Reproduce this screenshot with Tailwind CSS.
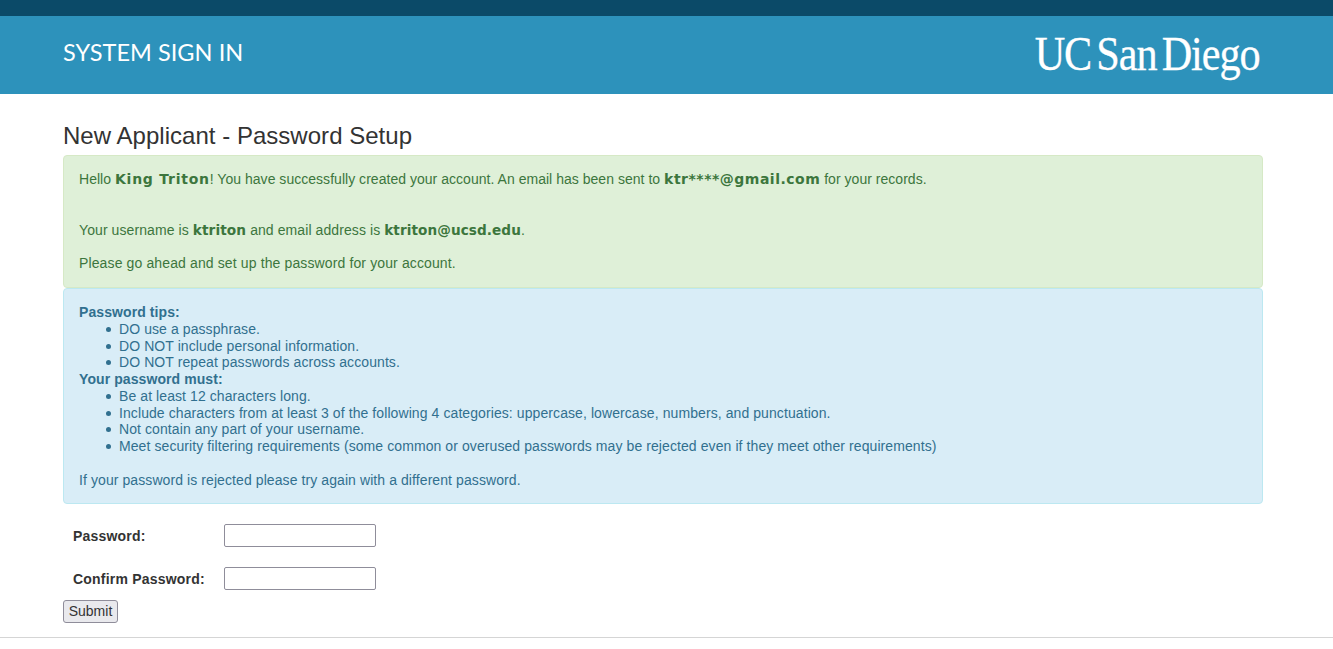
<!DOCTYPE html>
<html lang="en">
<head>
    <meta charset="UTF-8">
    <meta name="viewport" content="width=device-width, initial-scale=1.0">
    <title>New Applicant - Password Setup</title>
    <script src="https://cdn.jsdelivr.net/npm/@tailwindcss/browser@4"></script>
</head>
<body class="bg-white text-[#333333] font-['Liberation_Sans',Arial,sans-serif] text-[14px] overflow-hidden h-[649px]">

    <!-- Header -->
    <div class="h-4 bg-[#0b4a68]"></div>
    <div class="h-[78px] bg-[#2d92bb] flex items-center justify-between pl-[63px] pr-[73px]">
        <h2 class="font-['Lato',sans-serif] text-white text-[23.5px] tracking-[0.05px] -mt-[5px]">SYSTEM SIGN IN</h2>
        <div class="font-['Liberation_Serif',serif] text-white text-[48px] leading-none tracking-[-1.2px] [word-spacing:-5px] [-webkit-text-stroke:0.3px_white] scale-x-[0.88] origin-right -mt-[2px]">UC San Diego</div>
    </div>

    <div class="w-[1200px] ml-[63px]">
        <h1 class="text-[24px] leading-[26px] pt-[29px] pb-[6px] tracking-[0.03px] text-[#333333]">New Applicant - Password Setup</h1>

        <!-- Success message -->
        <div class="h-[133px] bg-[#dff0d8] border border-[#d6e9c6] rounded text-[#3c763d] px-[15px] pt-[14px] tracking-[0.085px]">
            <p class="leading-[18px] tracking-[0.03px]">Hello <b class="font-['DejaVu_Sans',sans-serif] text-[14px] tracking-[0.75px]">King Triton</b>! You have successfully created your account. An email has been sent to <b class="font-['DejaVu_Sans',sans-serif] text-[14px] tracking-[0.5px]">ktr****@gmail.com</b> for your records.</p>
            <p class="leading-[18px] mt-[33px]">Your username is <b class="font-['DejaVu_Sans',sans-serif] text-[13.7px]">ktriton</b> and email address is <b class="font-['DejaVu_Sans',sans-serif] text-[13.6px]">ktriton@ucsd.edu</b>.</p>
            <p class="leading-[18px] mt-[15px] tracking-[0.125px]">Please go ahead and set up the password for your account.</p>
        </div>

        <!-- Password tips -->
        <div class="h-[216px] bg-[#d9edf7] border border-[#bce8f1] rounded text-[#31708f] px-[15px] pt-[15.3px] leading-[16.72px] tracking-[0.085px]">
            <b>Password tips:</b>
            <ul class="list-none pl-10 [&>li]:relative [&>li]:before:absolute [&>li]:before:content-[''] [&>li]:before:left-[-13px] [&>li]:before:top-[6px] [&>li]:before:size-[5px] [&>li]:before:rounded-full [&>li]:before:bg-current">
                <li>DO use a passphrase.</li>
                <li>DO NOT include personal information.</li>
                <li>DO NOT repeat passwords across accounts.</li>
            </ul>
            <b>Your password must:</b>
            <ul class="list-none pl-10 [&>li]:relative [&>li]:before:absolute [&>li]:before:content-[''] [&>li]:before:left-[-13px] [&>li]:before:top-[6px] [&>li]:before:size-[5px] [&>li]:before:rounded-full [&>li]:before:bg-current">
                <li>Be at least 12 characters long.</li>
                <li>Include characters from at least 3 of the following 4 categories: uppercase, lowercase, numbers, and punctuation.</li>
                <li>Not contain any part of your username.</li>
                <li>Meet security filtering requirements (some common or overused passwords may be rejected even if they meet other requirements)</li>
            </ul>
            <p class="mt-[17px]">If your password is rejected please try again with a different password.</p>
        </div>

        <!-- Form -->
        <form class="pt-5">
            <div class="flex items-center h-[23px] pl-[10px]">
                <label class="w-[151px] pt-[2px] font-bold tracking-[0.2px] text-[#333333]">Password:</label>
                <input type="password" class="w-[152px] h-[23px] bg-white border border-[#8f8d9a] rounded-[2px]">
            </div>
            <div class="flex items-center h-[23px] pl-[10px] mt-5">
                <label class="w-[151px] pt-[2px] font-bold tracking-[0.2px] text-[#333333]">Confirm Password:</label>
                <input type="password" class="w-[152px] h-[23px] bg-white border border-[#8f8d9a] rounded-[2px]">
            </div>
            <button type="button" class="block mt-[10px] w-[55px] h-[23px] bg-[#e9e9ed] border border-[#8f8d9a] rounded-[3px] text-[14px] text-[#333333]">Submit</button>
        </form>
    </div>

    <hr class="mt-[14px] border-t border-[#d5d5d5]">

</body>
</html>
